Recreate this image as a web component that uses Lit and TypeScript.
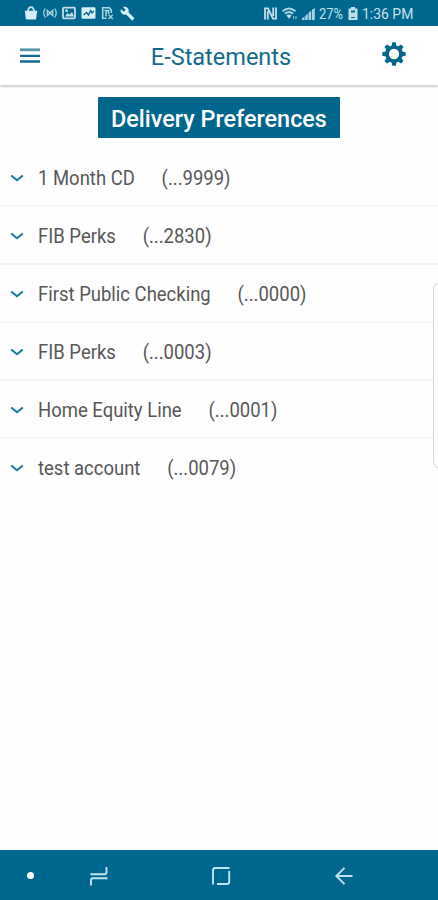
import { LitElement, html, css, svg } from "lit";
import { customElement, property } from "lit/decorators.js";

interface Account {
  name: string;
  digits: string;
}

const ACCOUNTS: Account[] = [
  { name: "1 Month CD", digits: "9999" },
  { name: "FIB Perks", digits: "2830" },
  { name: "First Public Checking", digits: "0000" },
  { name: "FIB Perks", digits: "0003" },
  { name: "Home Equity Line", digits: "0001" },
  { name: "test account", digits: "0079" },
];

@customElement("status-bar")
class StatusBar extends LitElement {
  static styles = css`
    :host {
      display: flex;
      justify-content: space-between;
      align-items: center;
      box-sizing: border-box;
      height: 26px;
      padding: 1px 25px 0 24px;
      background: #00688f;
      color: #c3e0ea;
      font: 400 15.5px/24px Roboto, "Liberation Sans", sans-serif;
    }
    .group {
      display: flex;
      align-items: center;
    }
    .left {
      gap: 5px;
      margin-top: -1px;
    }
    svg {
      display: block;
      flex: none;
    }
    .nfc,
    .battery {
      margin-top: -1px;
    }
    .wifi {
      margin-left: 5px;
    }
    .signal {
      margin: 0 4px 0 3px;
    }
    .percent,
    .time {
      white-space: nowrap;
      transform-origin: left center;
    }
    .percent {
      width: 25px;
      transform: scaleX(0.83);
    }
    .battery {
      margin-left: 4px;
      margin-right: 4px;
    }
    .time {
      width: 51px;
      transform: scaleX(0.9);
    }
  `;
  render() {
    return html`
      <div class="group left">
        <svg width="14" height="14" viewBox="0 0 14 14">
          <path d="M.8 4.800h12.400l-1 7.500q-.2 1.200-1.400 1.200H3.200Q2 13.500 1.800 12.300z" fill="#d5edf4" />
          <path d="M3.800 5.500Q4.500 1.200 7 1.200t3.200 4.300" fill="none" stroke="#c3e0ea" stroke-width="1.800" />
        </svg>
        <svg width="14" height="14" viewBox="0 0 14 14" fill="none" stroke="#a9d3e1" stroke-width="1.300">
          <path d="M2.200 2.500Q-.6 7 2.200 11.500M11.800 2.500q2.800 4.500 0 9M4.300 4.300v5.400L7 7l2.700 2.700V4.300L7 7z" />
          <circle cx="7" cy="7" r="1" fill="#c3e0ea" stroke="none" />
        </svg>
        <svg width="14" height="14" viewBox="0 0 14 14">
          <rect x="1" y="1.700" width="12" height="10.600" rx="1" fill="none" stroke="#c3e0ea" stroke-width="1.800" />
          <path d="M3 10.500 5.500 7l2 1.800L10 6l2 4.500zM3.300 3.500h2.500v2.500H3.300z" fill="#c3e0ea" />
        </svg>
        <svg width="15" height="14" viewBox="0 0 15 14">
          <rect x=".5" y="1.300" width="14" height="11.400" rx="1.200" fill="#d5edf4" />
          <path d="m2.500 9 3-2.500 2 2.500 2.200-4.500L11 7l2-2" fill="none" stroke="#00688f" stroke-width="1.300" />
        </svg>
        <svg width="14" height="14" viewBox="0 0 14 14" fill="none" stroke="#a9d3e1" stroke-width="1.600">
          <path d="M5.500 12.300H1.700V1.700h6.500l2.100 2.100V7M3.500 4.500h5M5 4.500v6M7.500 4.500V8" />
          <path d="m7.500 8.700 4.300 4.200M11.800 8.700l-4.300 4.200" stroke-width="1.400" />
        </svg>
        <svg width="15" height="15" viewBox="0 0 24 24">
          <path
            d="M22.700 19l-9.100-9.100c.9-2.300.4-5-1.500-6.900-2-2-5-2.400-7.400-1.300L9 6 6 9 1.600 4.700C.4 7.100.9 10.100 2.900 12.100c1.900 1.900 4.600 2.400 6.900 1.500l9.100 9.100c.4.400 1 .4 1.400 0l2.300-2.300c.5-.4.5-1.100.1-1.400z"
            fill="#d5edf4"
          />
        </svg>
      </div>
      <div class="group">
        <svg class="nfc" width="13" height="13" viewBox="0 0 13 13" fill="none" stroke="#c3e0ea" stroke-width="1.800">
          <path d="M1 12.500V1.300h3L9.200 12M3.800 12.500V4M9.200 9V.5M12 .5v11.200H9" />
        </svg>
        <svg class="wifi" width="17" height="14" viewBox="0 0 17 14" fill="none" stroke="#a9d3e1">
          <path d="M.5 4.300q6.500-5.500 13 0M2.800 6.800q4.200-3.500 8.400 0" stroke-width="1.800" />
          <path d="M4.500 8.500q2.500-1.900 5 0L7 11.700z" fill="#c3e0ea" stroke="none" />
          <path d="M11.700 9v3M14 9v3" stroke="#7db9cd" stroke-width="1.200" />
        </svg>
        <svg class="signal" width="13" height="12" viewBox="0 0 13 12" fill="#a9d3e1">
          <path d="M0 12V10.500l2.500-2V12zM3.200 12V8l2.500-2.300V12zM6.500 12V5l2.700-2.500V12zM10 12V1.800L12.800 0v12z" />
        </svg>
        <span class="percent">27%</span>
        <svg class="battery" width="10" height="13" viewBox="0 0 10 13">
          <path d="M3 0h4v1.400h2.500V13H.5V1.400H3z" fill="#c3e0ea" />
          <path d="M3 3.500h4v2H3zM3 10h4v1H3z" fill="#00688f" />
        </svg>
        <span class="time">1:36 PM</span>
      </div>
    `;
  }
}

@customElement("page-header")
class PageHeader extends LitElement {
  static styles = css`
    :host {
      display: grid;
      grid-template-columns: 22px 1fr 26px;
      align-items: center;
      box-sizing: border-box;
      height: 59px;
      padding: 0 31px 0 19px;
      background: #fff;
      box-shadow: 0 2px 2px #cfcfcf;
    }
    svg {
      display: block;
    }
    h1 {
      margin: 3px 0 0 20px;
      text-align: center;
      color: #126b8c;
      font: 400 23.5px/30px Roboto, "Liberation Sans", sans-serif;
      white-space: nowrap;
    }
    .gear {
      margin-top: -3px;
    }
  `;
  render() {
    const teeth = [0, 45, 90, 135, 180, 225, 270, 315];
    return html`
      <svg width="22" height="18" viewBox="0 0 22 18">
        <path d="M1 2.800h20" stroke="#5896ab" stroke-width="2.800" />
        <path d="M1 8.900h20M1 14.500h20" stroke="#146c8e" stroke-width="2.300" />
      </svg>
      <h1>E-Statements</h1>
      <svg class="gear" width="26" height="26" viewBox="-13 -13 26 26">
        <circle r="7" fill="none" stroke="#00668c" stroke-width="3.700" />
        ${teeth.map((a) => svg`<path d="M-2.600-7.500-1.700-11.700h3.400L2.600-7.500z" fill="#00668c" transform="rotate(${a})" />`)}
      </svg>
    `;
  }
}

@customElement("account-row")
class AccountRow extends LitElement {
  @property() name = "";
  @property() digits = "";
  static styles = css`
    :host {
      display: flex;
      align-items: center;
      box-sizing: border-box;
      height: 58px;
      padding: 2px 0 0 10px;
      border-bottom: 2px solid #f5f5f5;
      color: #585858;
      font: 400 20px/28px Roboto, "Liberation Sans", sans-serif;
      white-space: nowrap;
    }
    :host(:last-child) {
      border-bottom-color: transparent;
    }
    svg {
      display: block;
      margin-right: 14px;
    }
    .label {
      display: flex;
      gap: 29px;
      transform: scaleX(0.924);
      transform-origin: left center;
    }
  `;
  render() {
    return html`
      <svg width="14" height="10" viewBox="0 0 14 10">
        <path d="m1.200 2.500 5.800 4.700 5.800-4.700" fill="none" stroke="#167b9f" stroke-width="2" />
      </svg>
      <div class="label">
        <span>${this.name}</span>
        <span>(...${this.digits})</span>
      </div>
    `;
  }
}

@customElement("nav-bar")
class NavBar extends LitElement {
  static styles = css`
    :host {
      display: grid;
      grid-template-columns: 60px 78px 166px 80px 1fr;
      align-items: center;
      justify-items: center;
      height: 50.500px;
      padding-top: 2px;
      box-sizing: border-box;
      background: #00688f;
    }
    .dot {
      width: 7px;
      height: 7px;
      border-radius: 50%;
      background: #fff;
    }
    svg {
      display: block;
      fill: none;
      stroke: #bfe3ee;
      stroke-width: 1.9;
    }
  `;
  render() {
    return html`
      <span class="dot"></span>
      <svg width="20" height="20" viewBox="0 0 20 20">
        <path d="M1.500 8.300h14q2 0 2-2V1M2 19.500v-5.200q0-2 2-2h14.500" />
      </svg>
      <svg width="20" height="20" viewBox="0 0 20 20">
        <path d="M2 18.500V4.500q0-2.500 2.500-2.500H18.500M18.200 5v10.800q0 2.200-2.200 2.200H6" />
      </svg>
      <svg width="20" height="20" viewBox="0 0 20 20">
        <path d="M18.500 10H2M10.500 1.800 2.300 10l8.200 8.200" />
      </svg>
    `;
  }
}

@customElement("app-root")
class AppRoot extends LitElement {
  static styles = css`
    :host {
      display: flex;
      flex-direction: column;
      position: relative;
      height: 900px;
      overflow: hidden;
      background: #fefefe;
    }
    main {
      flex: 1;
      display: flex;
      flex-direction: column;
      padding-top: 12px;
    }
    button {
      align-self: center;
      box-sizing: border-box;
      width: 242px;
      height: 41px;
      margin: 0 0 11px;
      padding: 2px 0 0;
      border: 0;
      border-radius: 1px;
      background: #00668c;
      color: #fff;
      font: 500 23.4px/36px Roboto, "Liberation Sans", sans-serif;
      white-space: nowrap;
    }
    .edge-handle {
      position: absolute;
      top: 283px;
      right: -8px;
      box-sizing: border-box;
      width: 13px;
      height: 185px;
      border: 1.5px solid #d6d6d6;
      border-radius: 6px;
      background: #fff;
    }
  `;
  render() {
    return html`
      <status-bar></status-bar>
      <page-header></page-header>
      <main>
        <button>Delivery Preferences</button>
        <div>
          ${ACCOUNTS.map((a) => html`<account-row .name=${a.name} .digits=${a.digits}></account-row>`)}
        </div>
      </main>
      <nav-bar></nav-bar>
      <div class="edge-handle"></div>
    `;
  }
}
